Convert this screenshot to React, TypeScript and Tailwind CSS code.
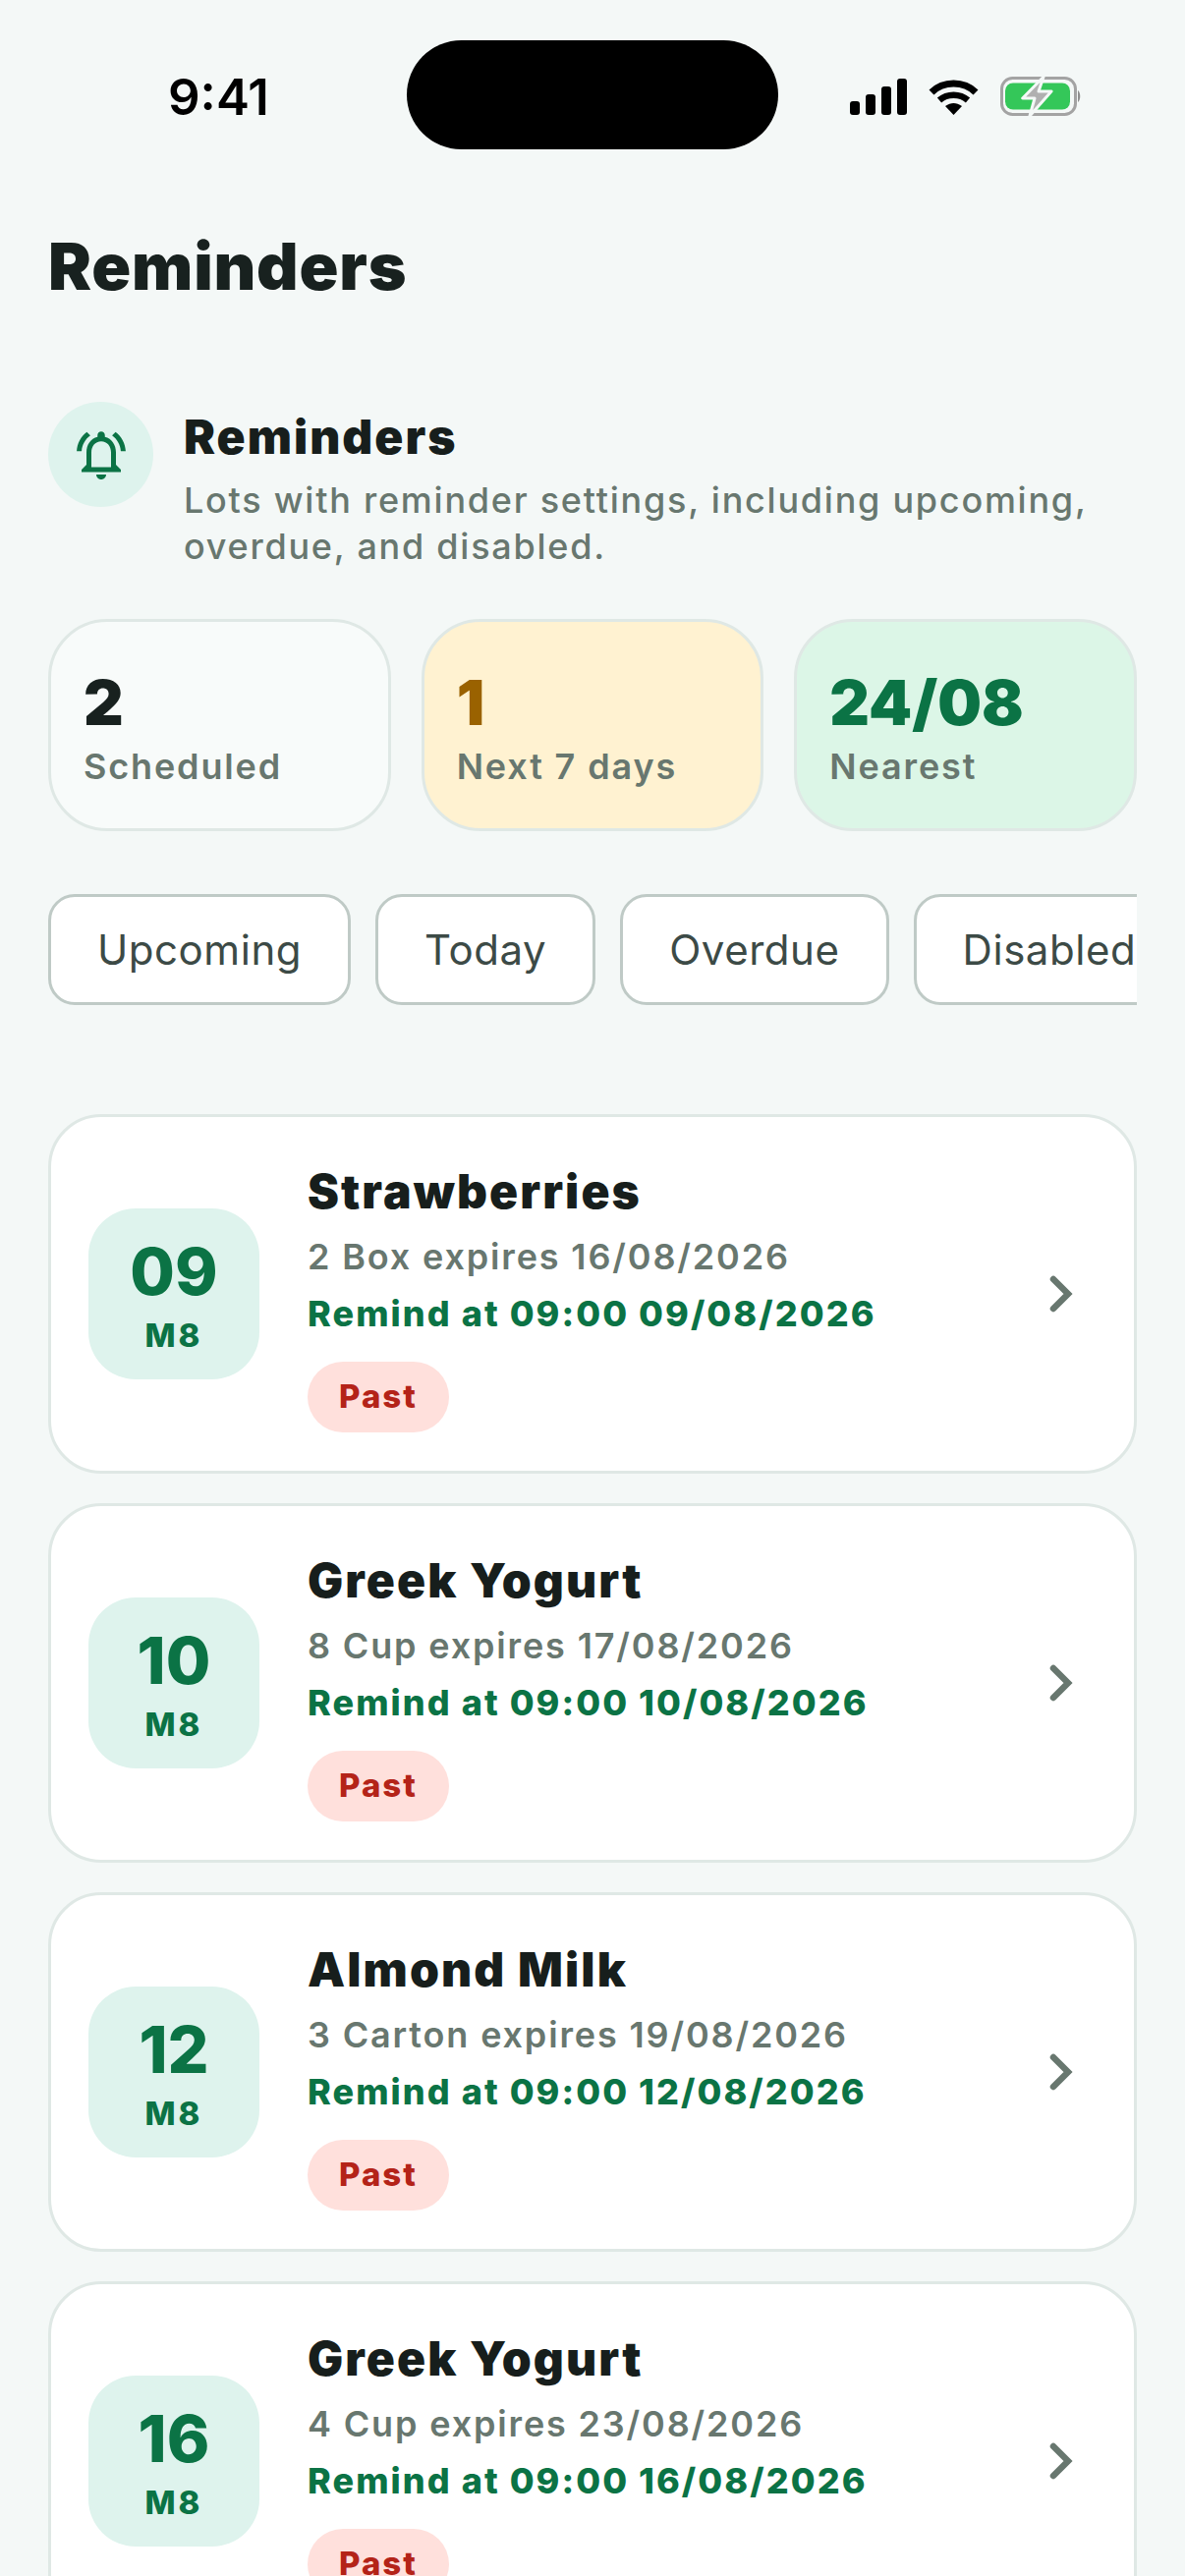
import React from "react";

const font = { fontFamily: "Inter, 'Liberation Sans', sans-serif" };

function Signal() {
  return (
    <svg width="58" height="37" viewBox="0 0 58 37" fill="#000">
      <rect x="0" y="23" width="10" height="14" rx="3" />
      <rect x="16" y="16" width="10" height="21" rx="3" />
      <rect x="32" y="8" width="10" height="29" rx="3" />
      <rect x="48" y="0" width="10" height="37" rx="3" />
    </svg>
  );
}

function Wifi() {
  return (
    <svg width="51" height="37" viewBox="0 0 51 37" fill="none" stroke="#000">
      <path d="M3 14 C15 2 36 2 48 14" strokeWidth="7" />
      <path d="M11 22 C19 15 32 15 40 22" strokeWidth="6.5" />
      <path d="M17 28 L25.5 37 L34 28 C28 24 23 24 17 28Z" fill="#000" stroke="none" />
    </svg>
  );
}

function Battery() {
  return (
    <svg width="82" height="42" viewBox="0 0 82 42" fill="none">
      <rect x="1.5" y="2.5" width="75" height="37" rx="11" stroke="#a3a3a3" strokeWidth="3" />
      <rect x="5" y="6" width="66" height="27" rx="8" fill="#34c759" transform="translate(0 1.5)" />
      <path d="M79 15 C82 17 82 25 79 27Z" fill="#8e8e8e" />
      <path d="M44 1.3 L22.7 23 H35 L30 41 L52 16 H39 Z" fill="#b0b0b0" stroke="#f4f8f7" strokeWidth="3" strokeLinejoin="round" />
    </svg>
  );
}

function Bell() {
  return (
    <svg width="60" height="60" viewBox="0 0 24 24" fill="#0b7345">
      <path d="M18 16v-5c0-3.07-1.63-5.64-4.5-6.32V4c0-.83-.67-1.5-1.5-1.5s-1.5.67-1.5 1.5v.68C7.64 5.36 6 7.92 6 11v5l-2 2v1h16v-1l-2-2zm-2 1H8v-6c0-2.48 1.51-4.5 4-4.5s4 2.02 4 4.5v6zm-4 5c1.1 0 2-.9 2-2h-4c0 1.1.9 2 2 2z" />
      <path d="M7.58 4.08L6.15 2.65C3.75 4.48 2.17 7.3 2.03 10.5h2c.15-2.65 1.51-4.97 3.55-6.42zm12.39 6.42h2c-.15-3.2-1.73-6.02-4.12-7.85l-1.42 1.43c2.02 1.45 3.39 3.77 3.54 6.42z" />
    </svg>
  );
}

function Chevron() {
  return (
    <svg width="26" height="38" viewBox="0 0 26 38" fill="none" stroke="#68776f" strokeWidth="6.5" className="shrink-0">
      <path d="M5 4 L20 19 L5 34" strokeLinecap="round" />
    </svg>
  );
}

function Stat({ value, label, bg, color }: { value: string; label: string; bg: string; color: string }) {
  return (
    <div className={`flex-1 h-[216px] rounded-[60px] border-[3px] border-[#dfe8e5] pl-[33px] pt-[46px] ${bg}`}>
      <div className={`text-[63px] leading-[72px] font-black ${color}`}>{value}</div>
      <div className="text-[36px] leading-[48px] mt-[5px] font-semibold tracking-[1.85px] text-[#68776f]">{label}</div>
    </div>
  );
}

function Chip({ label }: { label: string }) {
  return (
    <div className="shrink-0 h-[113px] px-[47px] flex items-center rounded-[27px] border-[3px] border-[#bfcac6] bg-white text-[42px] font-normal tracking-[0.55px] text-[#3c4a46]">
      {label}
    </div>
  );
}

function Card({ day, name, detail, remind }: { day: string; name: string; detail: string; remind: string }) {
  return (
    <div className="h-[366px] shrink-0 rounded-[54px] border-[3px] border-[#dfe8e5] bg-white flex items-center pl-[38px] pr-[61px]">
      <div className="w-[174px] h-[174px] shrink-0 rounded-[48px] bg-[#def3ed] flex flex-col items-center justify-center pt-[3px] text-[#0b7345]">
        <div className="text-[66px] leading-[72px] font-extrabold">{day}</div>
        <div className="text-[33px] leading-[42px] mt-[8px] font-extrabold tracking-[3px]">M8</div>
      </div>
      <div className="flex-1 ml-[49px] pt-[6px] flex flex-col items-start">
        <div className="text-[48px] leading-[60px] font-black tracking-[2.1px] text-[#171e1c]">{name}</div>
        <div className="text-[36px] leading-[48px] mt-[12px] font-semibold tracking-[1.85px] text-[#68776f]">{detail}</div>
        <div className="text-[36px] leading-[48px] mt-[10px] font-extrabold tracking-[2.05px] text-[#0b7345]">{remind}</div>
        <div className="mt-[25px] h-[72px] px-[32px] rounded-full bg-[#ffe0dc] flex items-center text-[33px] font-extrabold tracking-[2px] text-[#b42318]">
          Past
        </div>
      </div>
      <Chevron />
    </div>
  );
}

export default function App() {
  return (
    <div style={font} className="w-[1206px] h-[2622px] overflow-hidden bg-[#f4f8f7]">
      <div className="h-[232px] relative flex items-start">
        <div className="absolute left-[414px] top-[41px] w-[378px] h-[111px] rounded-[56px] bg-black" />
        <div className="ml-[171px] mt-[72px] text-[51px] leading-[54px] font-semibold text-black">9:41</div>
        <div className="ml-auto mr-[106px] mt-[77px] flex items-center gap-[22px]">
          <Signal />
          <Wifi />
          <Battery />
        </div>
      </div>
      <div className="px-[49px]">
        <h1 className="text-[66px] leading-[78px] font-black tracking-[0.8px] text-[#18211f]">Reminders</h1>
        <div className="flex mt-[99px]">
          <div className="w-[107px] h-[107px] rounded-full bg-[#def3ed] flex items-center justify-center shrink-0">
            <Bell />
          </div>
          <div className="ml-[31px] pt-[6px]">
            <div className="text-[48px] leading-[60px] font-black tracking-[2px] text-[#171e1c]">Reminders</div>
            <div className="text-[36px] leading-[47px] mt-[11px] font-medium tracking-[1.75px] text-[#68776f]">
              Lots with reminder settings, including upcoming,
              <br />
              overdue, and disabled.
            </div>
          </div>
        </div>
        <div className="flex gap-[31px] mt-[50px]">
          <Stat value="2" label="Scheduled" bg="bg-[#f8fbfa]" color="text-[#18211f]" />
          <Stat value="1" label="Next 7 days" bg="bg-[#fff2d1]" color="text-[#9a6200]" />
          <Stat value="24/08" label="Nearest" bg="bg-[#dcf6e7]" color="text-[#0b7345]" />
        </div>
        <div className="flex gap-[25px] mt-[64px] overflow-hidden">
          <Chip label="Upcoming" />
          <Chip label="Today" />
          <Chip label="Overdue" />
          <Chip label="Disabled" />
        </div>
        <div className="flex flex-col gap-[30px] mt-[111px]">
          <Card day="09" name="Strawberries" detail="2 Box expires 16/08/2026" remind="Remind at 09:00 09/08/2026" />
          <Card day="10" name="Greek Yogurt" detail="8 Cup expires 17/08/2026" remind="Remind at 09:00 10/08/2026" />
          <Card day="12" name="Almond Milk" detail="3 Carton expires 19/08/2026" remind="Remind at 09:00 12/08/2026" />
          <Card day="16" name="Greek Yogurt" detail="4 Cup expires 23/08/2026" remind="Remind at 09:00 16/08/2026" />
        </div>
      </div>
    </div>
  );
}
